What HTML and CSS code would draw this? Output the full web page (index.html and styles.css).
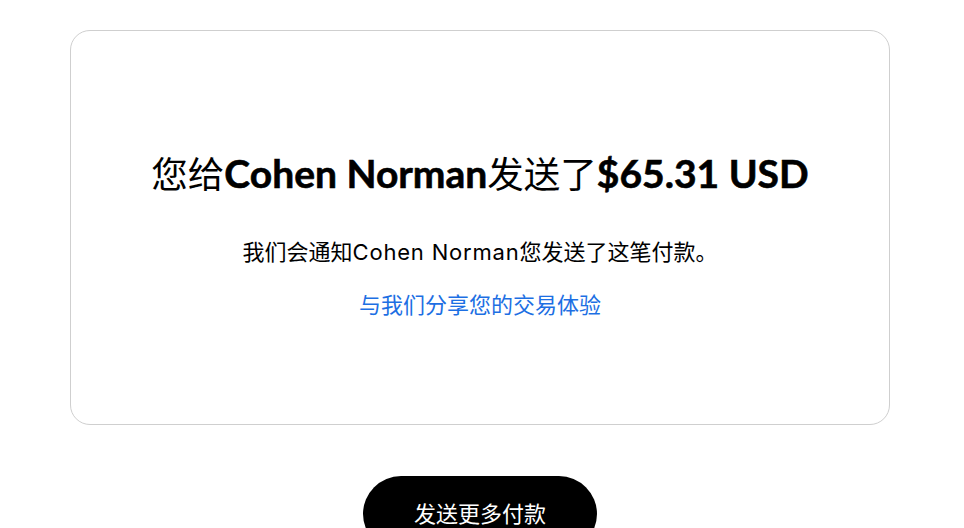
FILE: index.html
```html
<!DOCTYPE html>
<html lang="zh-CN">
<head>
<meta charset="utf-8">
<link rel="stylesheet" href="styles.css">
</head>
<body>
<main class="page">
  <section class="card">
    <h1 class="title"><span class="cjk">您给</span><span class="strong">Cohen Norman</span><span class="cjk">发送了</span><span class="strong">$65.31 USD</span></h1>
    <p class="note">我们会通知<span class="latin">Cohen Norman</span>您发送了这笔付款。</p>
    <a class="share" href="#">与我们分享您的交易体验</a>
  </section>
  <div class="actions">
    <button class="btn" type="button">发送更多付款</button>
  </div>
</main>
</body>
</html>
```

FILE: styles.css
```css
html, body {
  margin: 0;
  padding: 0;
  background: #ffffff;
}
body {
  font-family: "Noto Sans CJK SC", sans-serif;
  color: #000;
}
.page {
  padding: 30px 74px 0 70px;
}
.card {
  box-sizing: border-box;
  width: 820px;
  height: 395px;
  border: 1px solid #cfcfcf;
  border-radius: 20px;
  padding-top: 120px;
  display: flex;
  flex-direction: column;
  align-items: center;
}
.title {
  margin: 0;
  font-size: 36.5px;
  line-height: 44px;
  font-weight: 400;
  white-space: nowrap;
}
.title .cjk {
  font-family: "Noto Sans CJK SC", sans-serif;
  font-weight: 400;
}
.title .strong {
  font-family: "Lato", "Noto Sans CJK SC", sans-serif;
  font-size: 39px;
  font-weight: 700;
  letter-spacing: 0;
  -webkit-text-stroke: 0.6px #000;
}
.note {
  margin: 39px 0 0;
  font-size: 22px;
  line-height: 32px;
}
.note .latin {
  font-family: "Inter", "Liberation Sans", sans-serif;
  letter-spacing: 0.8px;
}
.share {
  margin-top: 19px;
  font-size: 22px;
  line-height: 32px;
  color: #1d6fe3;
  text-decoration: none;
}
.actions {
  display: flex;
  justify-content: center;
  margin-top: 51px;
  width: 820px;
}
.btn {
  width: 234px;
  height: 76px;
  border: 0;
  border-radius: 38px;
  background: #000;
  color: #fff;
  font-family: "Noto Sans CJK SC", sans-serif;
  font-size: 22px;
  line-height: 32px;
  padding: 0 0 4px;
  cursor: pointer;
}
```
